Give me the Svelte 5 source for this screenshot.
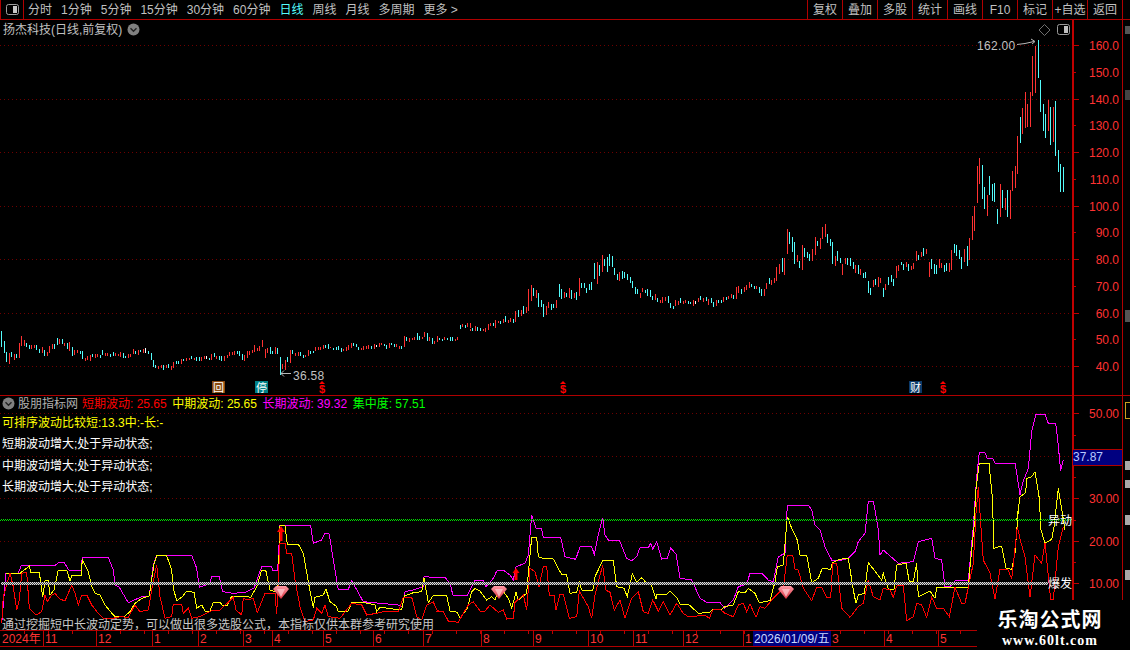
<script>
  const parseCandles = (s, x0, y0, minPx = -1, maxPx = 1e9) =>
    s.split(';').map((r) => r.split(',')).filter((r) => +r[0] >= minPx && +r[0] < maxPx).map(([x, t, b, c]) => ({
      x: x0 + Math.floor(+x / 3),
      y: y0 + Math.round(+t / 3),
      h: Math.max(1, Math.round((+b - +t) / 3)),
      fill: c === 'r' ? '#ff3232' : c === 'c' ? '#54fcfc' : '#ffffff'
    }));

  const z9 = '4,18,65,c;13,48,84,c;19,80,111,c;28,84,117,r;34,81,96,c;43,87,105,r;50,87,99,c;57,54,99,r;64,33,63,r;72,45,63,r;79,54,66,c;88,60,72,c;94,60,72,r;103,60,69,r;109,60,75,c;118,72,84,c;127,66,84,r;133,75,93,c;142,81,93,r;148,63,84,r;157,57,72,r;163,57,72,c;172,39,60,c;178,42,57,r;187,42,57,c;193,54,63,r;202,54,72,c;209,51,78,r;217,66,93,c;223,75,90,r;232,75,84,r;241,78,87,c;247,78,102,c;256,99,108,r;262,93,105,r;271,90,108,r;277,87,96,c;286,87,99,r;292,87,96,r;301,90,99,c;307,75,90,c;316,84,93,r;322,84,93,r;331,87,96,c;340,81,93,c;346,84,93,r;355,87,93,r;361,81,96,r;370,84,99,c;376,93,99,c;385,87,99,r;391,87,96,r;400,72,87,r;406,78,87,c;415,75,90,r;421,75,81,c;430,72,84,r;436,69,84,w;445,78,87,c;454,84,105,c;460,105,126,c;466,120,129,c;475,123,132,r;484,120,129,r;490,120,135,c;499,120,129,r;505,117,129,c;514,123,135,r;520,111,129,r;529,108,117,c;535,108,117,c;544,102,117,r;550,102,108,c;559,99,108,r;568,99,105,r;574,93,102,c;583,99,105,r;589,96,108,c;598,96,108,c;604,96,108,r;613,93,102,r;619,93,102,w;628,99,105,c;634,87,105,r;643,84,96,c;649,93,102,r;658,93,105,c;664,93,108,c;673,93,108,r;682,90,99,r;688,81,93,r';
  const z10 = '7,156,165,r;13,153,165,r;22,153,162,c;28,153,168,c;37,162,180,c;43,165,183,r;52,153,174,r;58,153,165,r;67,150,159,r;73,135,156,r;82,144,153,r;88,138,153,r;97,120,141,r;106,147,174,r;112,144,159,r;121,141,162,c;127,153,162,c;136,141,162,r;142,144,162,c;151,171,225,c;157,192,207,r;166,180,210,r;172,171,186,c;181,150,189,r;187,150,162,c;196,159,168,r;205,156,168,r;211,156,168,c;220,165,174,c;226,165,171,r;235,150,168,r;241,153,162,c;250,153,159,c;256,141,153,r;265,141,150,r;271,141,150,r;280,135,147,r;286,135,144,c;295,132,147,c;301,141,144,r;310,144,150,c;319,141,150,c;325,138,150,c;334,144,156,c;340,147,153,r;349,141,153,r;355,135,150,r;364,129,144,r;370,129,138,c;379,132,141,c;385,141,150,c;394,144,150,r;400,138,150,r;409,138,147,r;415,135,147,r;424,138,147,c;433,132,147,r;439,135,141,w;448,129,141,r;454,129,135,r;463,132,138,c;469,135,147,c;478,129,144,r;484,129,135,c;493,132,141,c;499,132,141,r;508,138,147,r;514,138,147,c;523,108,141,r;529,111,123,c;538,114,126,r;547,114,120,r;553,111,120,r;562,99,120,c;568,108,120,c;577,111,117,r;583,96,111,r;592,99,123,c;598,111,123,r;607,114,132,c;613,123,132,r;622,108,126,r;628,114,120,c;637,117,123,c;643,111,120,r;652,114,120,c;661,111,123,c;667,111,123,c;676,117,123,r;682,111,120,r';
  const gap = '0,27,39,c;8,24,33,r;15,27,36,c;23,21,33,r;30,21,36,r';
  const z7 = '92,327,333,r;97,324,333,c;106,318,333,r;113,321,333,c;122,324,333,c;130,327,333,r;136,324,336,r;145,312,330,r;151,309,318,r;160,309,318,c;167,300,324,r;175,303,309,r;181,303,312,c;190,297,309,r;196,288,306,c;205,300,309,r;211,294,306,r;220,297,309,c;226,273,306,r;235,270,291,c;244,270,288,r;250,258,282,c;259,261,279,r;265,207,273,r;274,195,243,r;280,204,228,c;289,210,234,r;295,219,261,c;304,240,261,c;310,252,291,c;319,258,285,r;325,246,264,r;334,252,270,c;340,252,264,c;349,240,264,r;358,193,231,c;364,207,237,c;373,216,234,r;379,219,231,c;388,204,234,r;394,210,237,c;403,219,234,r;409,216,240,c;418,174,228,r;424,189,204,c;433,189,204,c;439,204,219,c;448,192,210,c;454,186,210,c;463,129,177,c;472,126,192,r;478,135,168,c;487,105,156,r;494,117,138,c;502,111,156,c;508,102,138,c;517,108,141,c;523,144,165,c;532,162,180,c;538,156,183,r;547,153,177,c;553,156,174,c;562,162,180,c;571,171,189,c;577,183,204,c;586,201,222,c;592,207,222,c;601,219,234,r;607,204,216,r;616,210,219,c;622,207,228,c;631,210,231,c;637,228,240,c;646,222,240,r;652,234,246,c;661,240,249,r;667,231,249,r;676,231,243,r;685,228,249,c;691,249,264,c;700,258,267,c;706,240,258,r;715,243,255,r;721,234,249,c;730,243,252,r;736,240,249,r;745,243,252,c;751,246,252,c;760,240,258,r;766,243,252,w;775,234,246,r;781,228,240,c;790,234,246,r;799,231,243,c;805,237,255,r;814,234,249,c;820,246,261,c;829,240,258,r;835,240,249,c;844,240,249,c;851,231,246,r;859,231,240,c;866,228,237,r';
  const z11 = '3,237,250,r;10,240,252,c;18,216,252,r;25,213,234,r;34,222,237,c;43,216,231,r;49,210,225,r;57,201,219,r;64,207,216,c;72,213,222,c;79,213,222,r;87,216,234,c;94,222,243,c;103,222,243,r;109,204,222,r;118,189,207,c;124,195,210,r;133,189,204,r;139,156,198,r;148,147,177,r;156,129,171,c;163,129,180,r;172,42,117,r;178,51,87,c;187,66,111,c;193,81,147,c;202,120,141,r;208,138,159,c;217,90,165,r;223,99,126,c;232,111,129,c;238,117,138,c;247,102,138,r;256,66,120,r;262,78,93,c;270,69,102,r;277,36,72,r;286,27,66,r;292,57,84,c;301,72,93,c;307,81,147,c;316,123,153,r;322,108,138,c;331,129,144,c;338,147,180,r;347,129,147,r;352,129,150,c;361,129,153,c;370,141,162,c;376,150,174,r;385,150,177,c;391,162,180,r;400,174,189,c;406,171,189,c;415,198,234,c;421,219,240,c;430,195,216,r;436,192,210,c;445,186,216,r;451,189,204,r;460,219,246,c;466,207,225,r;475,186,210,c;484,180,201,c;490,192,213,c;499,153,189,r;505,150,168,r';
  const z8 = '3,697,706,c;10,703,720,c;19,697,711,r;26,703,723,c;34,708,720,r;40,699,716,r;49,663,692,r;56,676,692,c;64,667,681,r;71,654,678,c;79,657,671,r;88,697,743,r;95,688,717,c;103,701,732,c;110,705,732,c;118,688,715,r;125,698,714,r;133,706,728,c;140,699,723,c;148,699,727,r;155,660,720,r;163,643,671,c;170,646,680,c;177,660,687,c;184,681,717,c;193,657,695,r;202,648,708,c;209,625,692,r;217,559,632,r;224,528,602,r;232,408,518,r;238,384,461,r;247,406,507,c;254,471,536,c;262,495,557,r;268,438,495,c;276,462,513,c;283,459,515,c;292,537,581,c;301,462,562,r;308,481,535,c;316,503,539,r;323,481,561,c;331,481,569,r;338,423,482,r;346,408,474,r;353,318,431,r;361,262,339,c;368,234,312,r;376,186,293,r;383,223,291,r;391,186,291,r;397,78,197,r;406,48,188,r;415,30,143,c;421,150,245,c;430,222,303,c;437,253,326,c;445,210,302,r;452,231,344,c;460,231,336,r;466,214,380,c;475,360,425,c;482,402,485,c;490,411,485,c';

  const candles = [
    ...parseCandles(z9, 0, 325),
    ...parseCandles(z10, 230, 300),
    ...parseCandles(gap, 460, 316),
    ...parseCandles(z7, 440, 220),
    ...parseCandles(z11, 730, 215),
    ...parseCandles(z8, 900, 30)
  ];

  const pts = (s, x0, y0) =>
    s.trim().split(/\s+/).map((p) => {
      const [x, y] = p.split(',');
      return `${(x0 + +x / 3).toFixed(1)},${(y0 + +y / 3).toFixed(1)}`;
    }).join(' ');

  const magenta = [
    pts('5,340 18,190 55,190 63,168 165,166 178,157 192,157 208,182 243,182 247,142 325,142 340,180 345,225 358,232 385,278 412,266 425,260 448,258 460,165 470,136 575,136 590,175 598,232 630,220 635,199 658,200 668,245 700,250 735,247 762,235 785,170 815,170 818,182 833,182 840,47 932,47 940,100 965,90 975,70 988,72 1000,150 1015,238 1045,238 1055,212 1090,275 1195,285 1207,290 1215,245 1240,240 1270,230 1272,200 1320,203', 0, 510),
    pts('45,216 62,240 68,270 112,272 125,245 135,225 160,225 168,245 190,220 200,198 220,195 240,210 250,225 258,185 285,175 295,150 305,30 318,70 335,72 340,97 392,97 405,155 437,163 450,125 485,125 493,148 505,90 518,38 525,90 535,105 568,105 590,160 605,167 620,155 630,128 655,128 662,115 668,132 680,110 695,162 712,160 722,128 738,148 750,220 785,225 810,280 830,292 870,292', 430, 505),
    pts('60,278 75,295 100,270 115,230 140,222 150,190 185,190 205,210 220,215 235,140 255,130 262,-15 325,-15 335,0 345,45 360,60 375,110 395,150 425,150 445,145 465,125 475,95 495,70 505,-25 520,-25 525,0 535,60 540,135 550,120 595,160 640,155 655,95 695,85 705,145 725,150 735,230 750,230 765,212 805,212 820,50', 700, 510),
    pts('290,290 298,218 315,218 322,235 338,235 345,250 405,250 412,290 420,345 428,308 445,265 455,155 468,103 495,103 505,130 527,130 533,180 542,272 550,240', 880, 380)
  ].join(' ');

  const yellow = [
    pts('18,190 60,190 88,168 92,187 118,187 128,262 135,212 145,212 150,255 162,240 175,180 200,180 210,212 215,197 243,197 247,150 265,185 275,230 285,250 300,255 315,285 340,315 345,320 372,320 390,305 405,280 425,265 448,258 462,162 470,137 500,137 515,180 520,235 530,272 545,262 560,244 582,247 590,295 605,285 615,303 630,303 640,277 660,277 668,287 682,287 695,258 730,258 752,262 770,230 785,180 797,180 810,240 833,248 835,200 840,47 855,47 862,103 895,103 910,130 925,215 940,293 945,262 970,255 978,238 990,275 1010,290 1015,305 1045,303 1055,277 1090,277 1125,285 1130,305 1140,292 1180,297 1205,300 1213,258 1240,248 1265,245 1272,205 1285,278 1300,256 1320,256', 0, 510),
    pts('50,272 60,318 82,322 90,340 112,310 125,260 135,250 150,258 170,285 185,275 195,285 210,245 235,280 245,310 258,262 265,285 290,265 295,205 305,97 320,97 325,155 340,160 370,162 382,185 395,208 410,210 420,265 440,262 448,230 455,255 488,257 495,215 518,167 550,167 560,245 582,250 592,275 607,207 620,232 635,218 655,240 662,235 678,283 680,268 710,268 720,258 740,278 750,297 778,300 805,325 840,322 850,312 870,315', 430, 505),
    pts('65,297 75,290 100,285 115,245 135,248 145,235 165,250 178,278 210,272 225,215 232,170 250,165 262,20 275,55 292,90 300,135 320,135 335,218 355,205 367,175 392,178 397,158 420,148 445,145 460,240 468,280 475,255 493,250 505,158 530,190 545,210 550,190 565,238 582,238 590,165 618,160 628,215 640,215 650,160 655,260 690,243 705,265 710,232 760,232 780,232 805,232 810,170 825,20', 700, 510),
    pts('283,430 287,335 298,250 327,250 337,350', 880, 380),
    pts('882,115 905,108 918,175 935,178 945,130 955,0', 700, 510),
    pts('410,420 420,350 437,338 440,295 455,290 465,275 478,355 483,450', 880, 380),
    pts('1035,100 1055,88 1062,50', 700, 510),
    pts('535,325 543,375 555,450', 880, 380)
  ].join(' ');

  const red = [
    pts('5,340 10,260 30,190 40,230 50,300 58,270 65,190 80,187 88,295 108,315 125,305 135,255 142,275 155,255 165,250 180,268 195,272 205,250 215,225 225,250 235,285 245,255 260,255 275,285 295,310 310,325 340,325 360,320 385,322 405,285 420,305 445,300 455,240 470,165 480,260 495,325 515,320 520,282 545,282 550,310 565,295 575,325 600,320 640,300 660,300 700,262 708,300 725,315 730,265 745,270 760,265 772,308 795,250 825,250 830,312 840,100 855,100 860,130 875,130 885,210 900,290 915,335 940,330 950,295 965,310 975,285 985,320 1020,325 1055,280 1085,285 1100,315 1130,310 1150,305 1195,305 1210,262 1235,262 1250,320 1265,330 1280,285 1300,275 1310,300 1320,305', 0, 510),
    pts('18,318 40,320 55,348 85,352 100,325 115,300 130,290 150,318 165,318 180,300 205,322 220,315 230,342 250,340 255,292 280,270 290,315 300,190 315,200 327,245 340,185 350,185 358,270 372,270 378,315 390,268 400,268 418,340 440,335 448,258 475,305 485,340 495,270 518,180 527,255 540,262 553,315 570,285 585,340 605,280 625,260 640,320 655,325 668,285 685,318 700,290 720,330 740,295 760,325 775,335 800,333 825,330 838,340 850,312 870,312', 430, 505),
    pts('75,310 100,320 115,285 130,280 140,305 150,282 168,322 180,290 195,295 215,270 235,250 250,235 262,135 278,135 285,178 295,180 310,235 335,272 350,232 365,232 380,262 392,262 398,160 410,160 425,295 450,322 475,290 490,280 505,210 520,260 540,270 550,235 570,240 580,262 590,228 610,225 620,332 640,320 650,280 665,285 680,322 695,262 710,295 730,295 748,320 765,232 785,280 795,280 820,160 828,10', 700, 510),
    pts('295,322 300,400', 880, 380),
    pts('850,150 870,190 885,268 900,178 925,180 935,208 952,50 962,95 975,140 990,262 1005,135 1025,160 1035,100 1052,268 1060,268 1075,110 1090,50', 700, 510)
  ].join(' ');

  const periods = [
    { t: '分时' }, { t: '1分钟' }, { t: '5分钟' }, { t: '15分钟' }, { t: '30分钟' }, { t: '60分钟' },
    { t: '日线', on: true }, { t: '周线' }, { t: '月线' }, { t: '多周期' }, { t: '更多 >' }
  ];
  const actions = ['复权', '叠加', '多股', '统计', '画线', 'F10', '标记', '+自选', '返回'];

  const priceGrid = [45, 99, 152, 206, 259, 313, 366];
  const priceLabels = [160, 150, 140, 130, 120, 110, 100, 90, 80, 70, 60, 50, 40].map((v, i) => ({
    t: v.toFixed(1), y: Math.round(45 + i * 26.75)
  }));
  const indicatorGrid = [413, 456, 498, 541];
  const indicatorLabels = [
    { t: '50.00', y: 413 }, { t: '30.00', y: 498 }, { t: '20.00', y: 541 }, { t: '10.00', y: 583 }
  ];
  const indicatorMinor = [435, 477, 520, 562, 604];
  const dates = [
    { x: 43, t: '11' }, { x: 96, t: '12' }, { x: 152, t: '1' }, { x: 198, t: '2' }, { x: 243, t: '3' },
    { x: 272, t: '4' }, { x: 323, t: '5' }, { x: 373, t: '6' }, { x: 423, t: '7' }, { x: 481, t: '8' },
    { x: 533, t: '9' }, { x: 588, t: '10' }, { x: 633, t: '11' }, { x: 683, t: '12' }, { x: 743, t: '1' },
    { x: 830, t: '3' }, { x: 884, t: '4' }, { x: 938, t: '5' }
  ];
  const minor = Array.from({ length: 40 }, (_, i) => 24 + i * 24);
  const gems = [281, 499, 786];
  const dollars = [322, 563, 943];
</script>

<svelte:head><title>扬杰科技</title></svelte:head>

<div class="page">
  <header class="toolbar">
    <div class="layout-btn">
      <svg width="13" height="11" viewBox="0 0 13 11"><rect x="0.5" y="0.5" width="12" height="10" rx="2" fill="none" stroke="#a0a0a0"/><rect x="7" y="2" width="4" height="7" fill="#c8c8c8"/></svg>
    </div>
    <nav class="periods">
      {#each periods as p}
        <span class:on={p.on}>{p.t}</span>
      {/each}
    </nav>
    <nav class="actions">
      {#each actions as a}
        <span>{a}</span>
      {/each}
    </nav>
  </header>

  <main class="work">
    <section class="price">
      <div class="title">
        <span>扬杰科技(日线,前复权)</span>
        <svg width="13" height="13" viewBox="0 0 13 13"><circle cx="6.5" cy="6.5" r="6" fill="#808080"/><path d="M3.5 5.2l3 3 3-3" fill="none" stroke="#222" stroke-width="1.4"/></svg>
      </div>
      <svg class="canvas" viewBox="0 20 1072 375" width="1072" height="375">
        <defs>
          <pattern id="dots-a" width="4" height="1" patternUnits="userSpaceOnUse">
            <rect width="1" height="1" fill="#6e0000"/>
          </pattern>
        </defs>
        {#each priceGrid as y}
          <rect x="0" y={y} width="1072" height="1" fill="url(#dots-a)" shape-rendering="crispEdges"/>
        {/each}
        {#each candles as c}
          <rect x={c.x} y={c.y} width="1" height={c.h} fill={c.fill} shape-rendering="crispEdges"/>
        {/each}

        <text class="note" x="977" y="50">162.00</text>
        <path class="note-line" d="M1017 44.5l8-1 9-2M1031 39l4 2.5-3 2.5"/>
        <path class="diamond" d="M1044.500 24.500l5.500 5.500-5.500 5.500-5.500-5.500z"/>
        <rect x="1057.500" y="24.500" width="12" height="10" rx="2" fill="none" stroke="#9a9a9a"/>
        <rect x="1064" y="26" width="4" height="7" fill="#c0c0c0"/>
        <text class="note" x="293" y="380">36.58</text>
        <path class="note-line" d="M281 373.500h10M284 370.500l-3 3 3 3"/>

        <rect x="212" y="381" width="13" height="12" fill="#8a4a10"/>
        <text class="badge" x="218.500" y="391.500">回</text>
        <rect x="255" y="381" width="13" height="12" fill="#007f86"/>
        <text class="badge" x="261.500" y="391.500">停</text>
        <rect x="909" y="381" width="13" height="12" fill="#0c3a6a"/>
        <text class="badge" x="915.500" y="391.500">财</text>
        {#each dollars as x}
          <path d={`M${x} 381l3 3h-6z`} fill="#ff0000"/>
          <text class="dollar" x={x} y="393">$</text>
        {/each}
      </svg>
    </section>
    <div class="axis">
      <svg class="canvas" viewBox="1072 20 50 375" width="50" height="375">
        <line class="rail" x1="1073" x2="1073" y1="20" y2="395"/>
        {#each priceLabels as l, i}
          <line class="tick" x1="1073" x2={i % 2 ? 1076 : 1079} y1={l.y + 0.5} y2={l.y + 0.5}/>
          <text class="axis-label" x="1119" y={l.y + 5}>{l.t}</text>
        {/each}
      </svg>
    </div>
    <aside class="side">
      <i class="block m1"></i>
      <i class="block m2"></i>
      <i class="block m3"></i>
    </aside>

    <section class="indicator">
      <svg class="canvas" viewBox="0 395 1072 235" width="1072" height="235">
        <defs>
          <pattern id="dots-b" width="4" height="1" patternUnits="userSpaceOnUse">
            <rect width="1" height="1" fill="#6e0000"/>
          </pattern>
          <pattern id="check-green" width="2" height="2" patternUnits="userSpaceOnUse">
            <rect width="1" height="1" fill="#00d800"/>
            <rect x="1" y="1" width="1" height="1" fill="#00d800"/>
          </pattern>
          <pattern id="check-white" width="2" height="2" patternUnits="userSpaceOnUse">
            <rect width="2" height="2" fill="#404040"/>
            <rect width="1" height="1" fill="#e0e0e0"/>
            <rect x="1" y="1" width="1" height="1" fill="#e0e0e0"/>
          </pattern>
          <linearGradient id="gem" x1="0" y1="0" x2="0" y2="1">
            <stop offset="0" stop-color="#ff9aa6"/>
            <stop offset="1" stop-color="#d8303c"/>
          </linearGradient>
        </defs>
        {#each indicatorGrid as y}
          <rect x="0" y={y} width="1072" height="1" fill="url(#dots-b)" shape-rendering="crispEdges"/>
        {/each}
        <polyline class="wave magenta" points={magenta}/>
        <polyline class="wave yellow" points={yellow}/>
        <polyline class="wave red" points={red}/>

        <rect x="0" y="519" width="1072" height="2" fill="url(#check-green)" shape-rendering="crispEdges"/>
        <rect x="1" y="582" width="1047" height="3" fill="url(#check-white)" shape-rendering="crispEdges"/>

        {#each gems as x}
          <path d={`M${x - 8} 589l3-3h10l3 3-8 10z`} fill="url(#gem)"/>
          <path d={`M${x - 4} 589h8l-4 8z`} fill="#ffd0d4" opacity="0.7"/>
        {/each}
        <path d="M281 526l4 6h-2.500v9h-3v-9h-2.500z" fill="#ff0000"/>
        <path d="M516 568l3.500 5h-2v7h-3v-7h-2z" fill="#ff0000"/>

        <text class="mark" x="1048" y="525">异动</text>
        <text class="mark" x="1048" y="588">爆发</text>
      </svg>
      <div class="legend">
        <div class="legend-head">
          <svg width="13" height="13" viewBox="0 0 13 13"><circle cx="6.500" cy="6.500" r="6" fill="#808080"/><path d="M3.500 5.200l3 3 3-3" fill="none" stroke="#222" stroke-width="1.400"/></svg>
          <span class="name">股朋指标网</span>
          <span class="t-red">短期波动: 25.65</span>
          <span class="t-yellow">中期波动: 25.65</span>
          <span class="t-magenta">长期波动: 39.32</span>
          <span class="t-green">集中度: 57.51</span>
        </div>
        <p class="t-yellow first-row">可排序波动比较短:13.3中:-长:-</p>
        <p>短期波动增大;处于异动状态;</p>
        <p>中期波动增大;处于异动状态;</p>
        <p>长期波动增大;处于异动状态;</p>
      </div>
      <p class="remark">通过挖掘短中长波动定势，可以做出很多选股公式，本指标仅供本群参考研究使用</p>
    </section>
    <div class="axis axis-low">
      <svg class="canvas" viewBox="1072 395 50 235" width="50" height="235">
        <line class="rail" x1="1073" x2="1073" y1="395" y2="630"/>
        {#each indicatorLabels as l}
          <line class="tick" x1="1074" x2="1079" y1={l.y + 0.5} y2={l.y + 0.5}/>
          <text class="axis-label" x="1119" y={l.y + 5}>{l.t}</text>
        {/each}
        {#each indicatorMinor as y}
          <line class="tick" x1="1074" x2="1076" y1={y + 0.5} y2={y + 0.5}/>
        {/each}
      </svg>
      <div class="last-value">37.87</div>
    </div>
    <aside class="side side-low">
      <i class="cell"></i>
      <i class="block b1"></i>
      <i class="block b2"></i>
      <i class="block b3"></i>
      <i class="block b4"></i>
    </aside>

    <footer class="dates">
      <svg class="canvas" viewBox="0 630 1072 17" width="1072" height="17">
        {#each minor as x}
          <line class="tick" x1={x + 0.5} x2={x + 0.5} y1="631" y2="634"/>
        {/each}
        {#each dates as d}
          <line class="tick" x1={d.x + 0.5} x2={d.x + 0.5} y1="630" y2="646"/>
          <text class="date" x={d.x + 2} y="643">{d.t}</text>
        {/each}
        <text class="date" x="2" y="643">2024年</text>
        <rect x="753" y="631" width="78" height="15" fill="#000080"/>
        <text class="date-now" x="754" y="643">2026/01/09/五</text>
      </svg>
    </footer>
  </main>

  <div class="watermark">
    <strong>乐淘公式网</strong>
    <em>www.60lt.com</em>
  </div>
</div>

<style>
  :global(body) {
    margin: 0;
    background: #000;
  }
  .page {
    position: relative;
    width: 1130px;
    height: 650px;
    overflow: hidden;
    background: #000;
    color: #c0c0c0;
    font: 12px/1 "Liberation Sans", "Noto Sans CJK SC", sans-serif;
  }
  .toolbar {
    display: flex;
    align-items: stretch;
    height: 19px;
    border-bottom: 1px solid #b00000;
  }
  .layout-btn {
    display: flex;
    align-items: center;
    justify-content: center;
    width: 22px;
    border-left: 1px solid #b00000;
    border-right: 1px solid #b00000;
  }
  .periods {
    display: flex;
    align-items: center;
    gap: 9px;
    padding-left: 4px;
    white-space: nowrap;
  }
  .periods .on {
    color: #54fcfc;
  }
  .actions {
    display: flex;
    margin-left: auto;
    margin-right: 7px;
    border-right: 1px solid #b00000;
  }
  .actions span {
    display: flex;
    align-items: center;
    justify-content: center;
    width: 35px;
    border-left: 1px solid #b00000;
    box-sizing: border-box;
    white-space: nowrap;
  }
  .work {
    display: grid;
    grid-template-columns: 1072px 50px 8px;
    grid-template-rows: 375px 235px 17px;
  }
  .canvas {
    display: block;
  }
  .price,
  .indicator {
    position: relative;
  }
  .title {
    position: absolute;
    top: 2px;
    left: 3px;
    display: flex;
    align-items: center;
    gap: 5px;
    height: 15px;
  }
  .note {
    font-size: 12px;
    letter-spacing: 0.3px;
    fill: #c0c0c0;
  }
  .note-line {
    fill: none;
    stroke: #b8b8b8;
    stroke-width: 1;
  }
  .diamond {
    fill: none;
    stroke: #707070;
    stroke-width: 1;
  }
  .badge {
    font-size: 11px;
    fill: #fff;
    text-anchor: middle;
  }
  .dollar {
    font-size: 11px;
    font-weight: 700;
    fill: #ff0000;
    text-anchor: middle;
  }
  .axis {
    position: relative;
  }
  .rail {
    stroke: #c00000;
    stroke-width: 2;
    shape-rendering: crispEdges;
  }
  .tick {
    stroke: #c00000;
    stroke-width: 1;
    shape-rendering: crispEdges;
  }
  .axis-label {
    font-size: 12px;
    fill: #ff3232;
    text-anchor: end;
  }
  .side {
    position: relative;
    border-left: 1px solid #b00000;
  }
  .price,
  .axis:not(.axis-low),
  .side:not(.side-low) {
    box-shadow: 0 1px 0 #b00000;
  }
  .wave {
    fill: none;
    stroke-width: 1;
    shape-rendering: crispEdges;
  }
  .magenta { stroke: #ff00ff; }
  .yellow { stroke: #ffff00; }
  .red { stroke: #ff0000; }
  .mark {
    font-size: 12px;
    fill: #fff;
  }
  .legend {
    position: absolute;
    top: 0;
    left: 0;
    width: 800px;
    color: #fff;
  }
  .legend-head {
    display: flex;
    align-items: center;
    height: 15px;
    padding: 0 0 0 2px;
    margin-top: 1px;
    white-space: nowrap;
  }
  .name {
    margin: 0 4px 0 3px;
    color: #b0b0b0;
  }
  .legend-head span + span {
    margin-right: 5.500px;
  }
  .legend p {
    margin: 0;
    height: 21.300px;
    line-height: 21.300px;
    padding-left: 2px;
    white-space: nowrap;
  }
  .legend .first-row {
    margin-top: 2px;
  }
  .t-red { color: #ff0000; }
  .t-yellow { color: #ffff00; }
  .t-magenta { color: #ff00ff; }
  .t-green { color: #00ff00; }
  .remark {
    position: absolute;
    left: 2px;
    bottom: -2px;
    margin: 0;
    height: 14px;
    line-height: 14px;
    color: #c8c8c8;
    white-space: nowrap;
  }
  .last-value {
    position: absolute;
    top: 55px;
    left: 1px;
    width: 49px;
    height: 15px;
    line-height: 15px;
    background: #000080;
    color: #b8c8ff;
    box-shadow: 0 -1px 0 #b00000, 0 1px 0 #b00000;
  }
  .cell {
    position: absolute;
    left: 2px;
    top: 7px;
    width: 8px;
    height: 15px;
    border: 1px solid #c8a020;
  }
  .block {
    position: absolute;
    left: 2px;
    width: 6px;
    background: #a8a8a8;
  }
  .m1 { top: 6px; height: 8px; opacity: 0.5; }
  .m2 { top: 70px; height: 10px; opacity: 0.4; }
  .m3 { top: 290px; height: 12px; opacity: 0.5; }
  .b1 { top: 66px; height: 9px; }
  .b2 { top: 85px; height: 8px; }
  .b3 { top: 120px; height: 10px; }
  .b4 { top: 175px; height: 10px; }
  .dates {
    grid-column: 1 / -1;
    height: 16px;
    box-shadow: inset 0 1px 0 #b00000, 0 1px 0 #b00000;
    position: relative;
  }
  .dates .canvas {
    position: absolute;
    top: 0;
    left: 0;
  }
  .date {
    font-size: 12px;
    fill: #ff3232;
  }
  .date-now {
    font-size: 12px;
    fill: #c8d8ff;
  }
  .watermark {
    position: absolute;
    right: 0;
    bottom: 0;
    display: flex;
    flex-direction: column;
    align-items: center;
    box-sizing: border-box;
    width: 153px;
    height: 50px;
    padding: 8px 7px 0 0;
    background: #000;
    color: #fff;
  }
  .watermark strong {
    font-size: 20px;
    line-height: 24px;
    letter-spacing: 1px;
    white-space: nowrap;
  }
  .watermark em {
    margin-top: 2px;
    font: 700 14px/14px "Liberation Serif", serif;
    letter-spacing: 1px;
    white-space: nowrap;
  }
</style>
